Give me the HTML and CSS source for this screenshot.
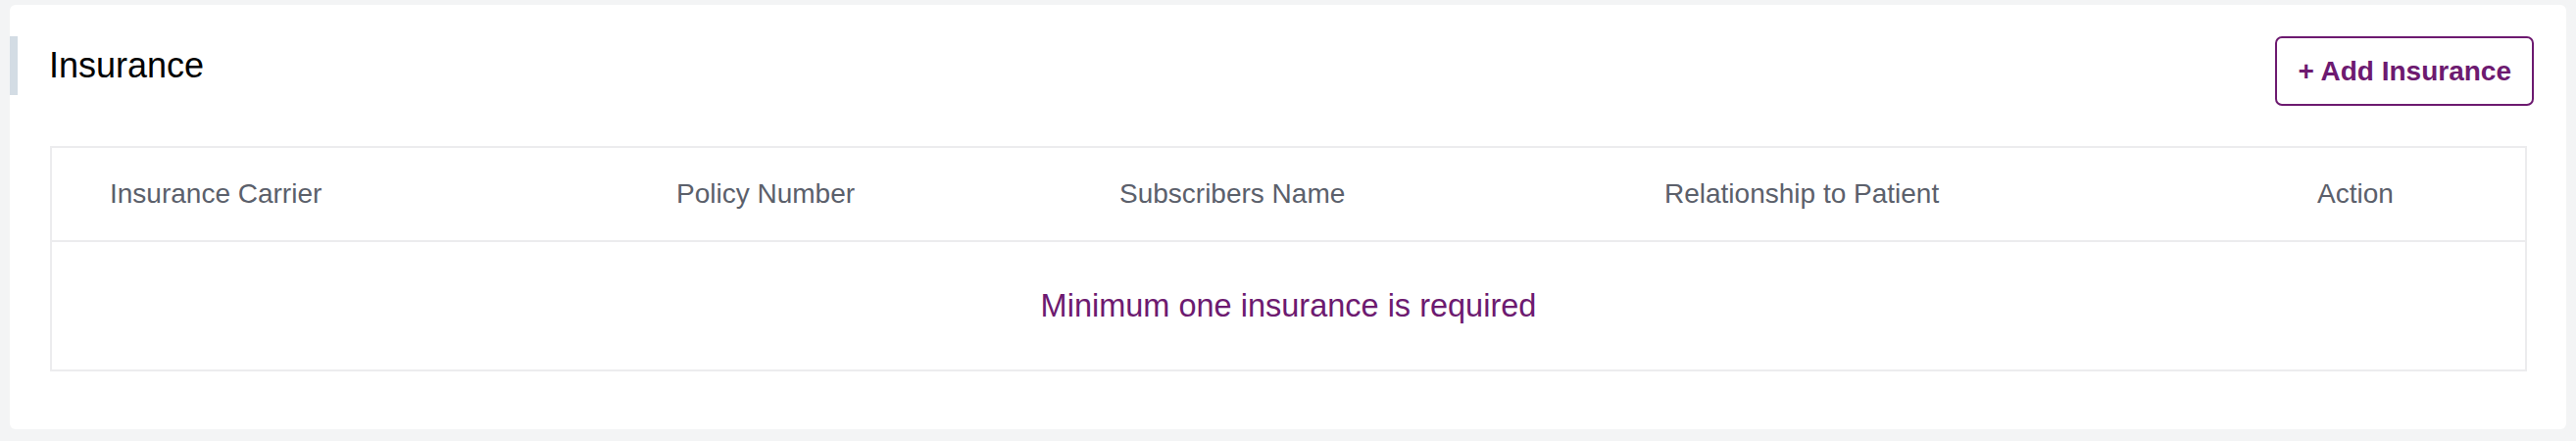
FILE: index.html
```html
<!DOCTYPE html>
<html lang="en">
<head>
<meta charset="utf-8">
<title>Insurance</title>
<link rel="stylesheet" href="styles.css">
</head>
<body>
  <section class="card">
    <header class="card-header">
      <h2 class="card-title">Insurance</h2>
      <button class="add-btn" type="button">+ Add Insurance</button>
    </header>
    <div class="table">
      <div class="table-head">
        <div class="th">Insurance Carrier</div>
        <div class="th">Policy Number</div>
        <div class="th">Subscribers Name</div>
        <div class="th">Relationship to Patient</div>
        <div class="th">Action</div>
      </div>
      <div class="table-empty">Minimum one insurance is required</div>
    </div>
  </section>
</body>
</html>
```

FILE: styles.css
```css
* { box-sizing: border-box; }

html, body {
  margin: 0;
  padding: 0;
}

body {
  background: #f3f4f5;
  font-family: "Liberation Sans", Arial, Helvetica, sans-serif;
  padding: 5px 10px 12px 10px;
}

.card {
  background: #ffffff;
  border-radius: 6px;
  padding: 32px 0 59px 0;
}

.card-header {
  display: flex;
  justify-content: space-between;
  align-items: flex-start;
  padding-right: 33px;
}

.card-title {
  margin: 0;
  height: 60px;
  line-height: 60px;
  font-size: 36px;
  font-weight: 400;
  color: #000000;
  border-left: 8px solid #d3dce4;
  padding-left: 32px;
}

.add-btn {
  display: flex;
  align-items: center;
  height: 71px;
  padding: 0 21px;
  background: #ffffff;
  border: 2px solid #6d1a70;
  border-radius: 7px;
  color: #6d1a70;
  font-family: "Liberation Sans", Arial, Helvetica, sans-serif;
  font-weight: 700;
  font-size: 28px;
  cursor: pointer;
}

.table {
  margin: 41px 40px 0 41px;
  border: 2px solid #ececee;
}

.table-head {
  display: grid;
  grid-template-columns: 578px 452px 556px 666px 1fr;
  height: 96px;
  border-bottom: 2px solid #ececee;
}

.th {
  display: flex;
  align-items: center;
  padding-left: 59px;
  font-size: 28px;
  color: #5b606b;
  white-space: nowrap;
}

.table-empty {
  display: flex;
  align-items: center;
  justify-content: center;
  height: 130px;
  font-size: 32.5px;
  color: #6d1a70;
}
```
